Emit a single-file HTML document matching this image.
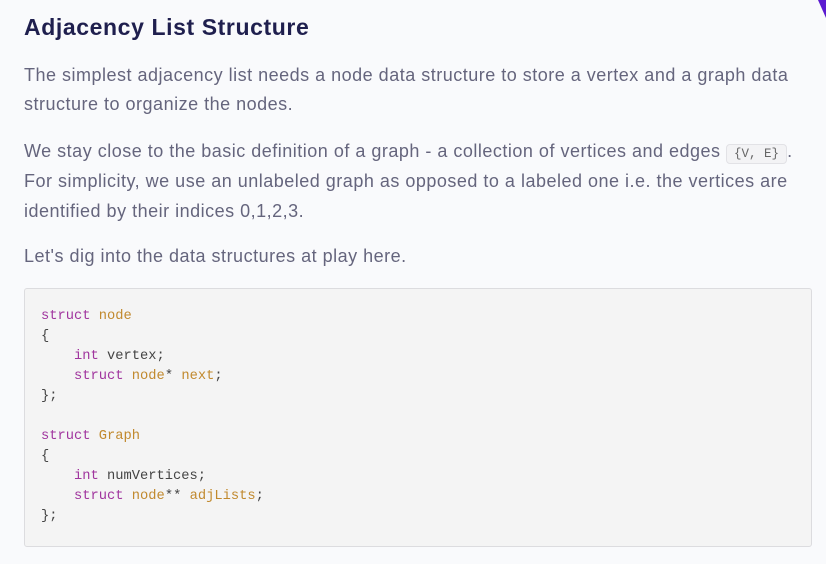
<!DOCTYPE html>
<html><head><meta charset="utf-8"><style>
html,body{margin:0;padding:0;background:#f9fafc;width:826px;height:564px;overflow:hidden}
body{font-family:"Liberation Sans",sans-serif;position:relative}
h1{position:absolute;left:24px;top:14px;margin:0;font-size:23px;font-weight:bold;color:#1f1f4e;letter-spacing:0.6px}
.l{position:absolute;left:24px;font-size:18px;letter-spacing:0.5px;color:#65657d;white-space:nowrap;line-height:20px}
code.i{font-family:"Liberation Mono",monospace;font-size:12.5px;letter-spacing:0;color:#666;background:#f3f3f5;border:1px solid #e2e2e6;border-radius:4px;padding:2px 7px}
.code{position:absolute;left:24px;top:288px;width:786px;height:257px;background:#f4f4f4;border:1px solid #dcdcdf;border-radius:3px}
pre{position:absolute;left:16px;top:18px;margin:0;font-family:"Liberation Mono",monospace;font-size:13.75px;line-height:20px;color:#444}
.k{color:#a0359e}.t{color:#c1892d}
.corner{position:absolute;right:0;top:0;width:0;height:0;border-left:8px solid transparent;border-top:18px solid #5b1bd0}
</style></head><body>
<div class="corner"></div>
<h1>Adjacency List Structure</h1>
<div class="l" style="top:65px">The simplest adjacency list needs a node data structure to store a vertex and a graph data</div>
<div class="l" style="top:94px">structure to organize the nodes.</div>
<div class="l" style="top:141px">We stay close to the basic definition of a graph - a collection of vertices and edges <code class="i">{V, E}</code>.</div>
<div class="l" style="top:171px">For simplicity, we use an unlabeled graph as opposed to a labeled one i.e. the vertices are</div>
<div class="l" style="top:201px">identified by their indices 0,1,2,3.</div>
<div class="l" style="top:246px">Let's dig into the data structures at play here.</div>
<div class="code"><pre><span class="k">struct</span> <span class="t">node</span>
{
    <span class="k">int</span> vertex;
    <span class="k">struct</span> <span class="t">node</span>* <span class="t">next</span>;
};

<span class="k">struct</span> <span class="t">Graph</span>
{
    <span class="k">int</span> numVertices;
    <span class="k">struct</span> <span class="t">node</span>** <span class="t">adjLists</span>;
};</pre></div>
</body></html>
